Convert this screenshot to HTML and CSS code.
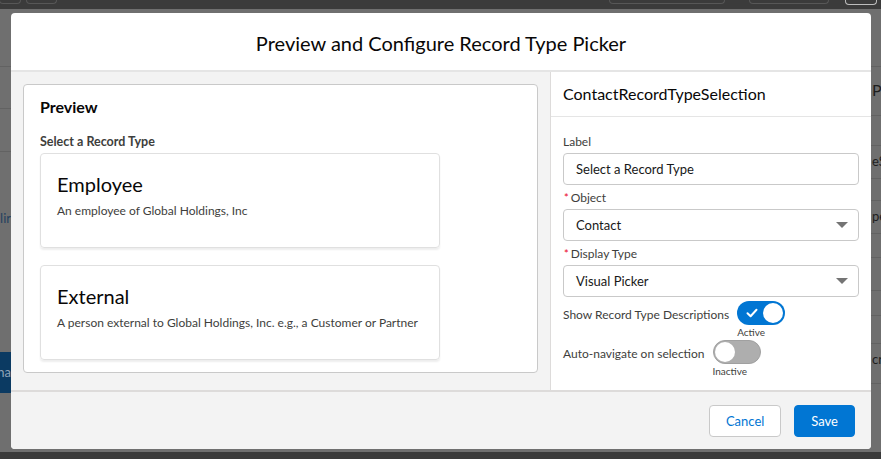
FILE: index.html
```html
<!DOCTYPE html>
<html lang="en">
<head>
<meta charset="utf-8">
<title>Preview and Configure Record Type Picker</title>
<link rel="stylesheet" href="styles.css">
</head>
<body>
<div class="topbar">
  <span class="tb-btn tb-a"></span>
  <span class="tb-btn tb-b"></span>
  <span class="tb-btn tb-c"></span>
  <span class="tb-btn tb-d"></span>
  <span class="tb-btn tb-e"></span>
</div>
<div class="stage">
  <div class="bd-left">
    <div class="bd-row h57"></div>
    <div class="bd-row h41"></div>
    <div class="bd-row h42"></div>
    <div class="bd-gap g56"></div>
    <div class="bd-text bd-link">lir</div>
    <div class="bd-gap g119"></div>
    <div class="bd-block">ha</div>
  </div>

  <div class="modal">
    <header class="modal-header">
      <h2>Preview and Configure Record Type Picker</h2>
    </header>
    <div class="modal-body">
      <section class="preview-col">
        <div class="preview-panel">
          <h3>Preview</h3>
          <div class="picker-label">Select a Record Type</div>
          <div class="rt-card">
            <div class="rt-title">Employee</div>
            <div class="rt-desc">An employee of Global Holdings, Inc</div>
          </div>
          <div class="rt-card rt-gap">
            <div class="rt-title">External</div>
            <div class="rt-desc">A person external to Global Holdings, Inc. e.g., a Customer or Partner</div>
          </div>
        </div>
      </section>
      <aside class="config-col">
        <div class="config-header">ContactRecordTypeSelection</div>
        <div class="config-form">
          <div class="field">
            <div class="field-label">Label</div>
            <div class="input">Select a Record Type</div>
          </div>
          <div class="field">
            <div class="field-label"><abbr class="req">*</abbr>Object</div>
            <div class="input select"><span>Contact</span><span class="caret"></span></div>
          </div>
          <div class="field">
            <div class="field-label"><abbr class="req">*</abbr>Display Type</div>
            <div class="input select"><span>Visual Picker</span><span class="caret"></span></div>
          </div>
          <div class="toggle-row">
            <div class="toggle-text">Show Record Type Descriptions</div>
            <div class="toggle-col">
              <div class="toggle on">
                <svg class="check" width="12" height="10" viewBox="0 0 12 10"><path d="M1.5 5.2 4.6 8.2 10.5 1.8" fill="none" stroke="#fff" stroke-width="2" stroke-linecap="round" stroke-linejoin="round"/></svg>
                <span class="knob"></span>
              </div>
              <div class="toggle-status">Active</div>
            </div>
          </div>
          <div class="toggle-row">
            <div class="toggle-text">Auto-navigate on selection</div>
            <div class="toggle-col">
              <div class="toggle off">
                <span class="knob"></span>
              </div>
              <div class="toggle-status">Inactive</div>
            </div>
          </div>
        </div>
      </aside>
    </div>
    <footer class="modal-footer">
      <button class="btn btn-neutral">Cancel</button>
      <button class="btn btn-brand">Save</button>
    </footer>
  </div>

  <div class="bd-right">
    <div class="bd-row h57"></div>
    <div class="bd-row r48 bd-frag big">P</div>
    <div class="bd-row r30"></div>
    <div class="bd-row r33 bd-frag">eS</div>
    <div class="bd-row r22"></div>
    <div class="bd-row r33 bd-frag">pe</div>
    <div class="bd-row r24"></div>
    <div class="bd-row r33"></div>
    <div class="bd-row r25"></div>
    <div class="bd-row r28"></div>
    <div class="bd-row r40 bd-frag">cri</div>
  </div>
</div>
<div class="bottombar"></div>
</body>
</html>
```
FILE: styles.css
```css
* { box-sizing: border-box; }

html, body {
  margin: 0;
  padding: 0;
}

body {
  width: 881px;
  height: 459px;
  overflow: hidden;
  background: #6f6f6f;
  font-family: "Lato", "Open Sans", sans-serif;
  color: #181818;
}

/* ---------- backdrop ---------- */
.topbar {
  height: 9px;
  background: #3b3b3b;
  display: flex;
  align-items: flex-start;
}
.tb-btn {
  display: block;
  height: 4px;
  border: 1px solid #575757;
  border-top: none;
  border-radius: 0 0 4px 4px;
}
.tb-a { width: 22px; margin-left: -1px; }
.tb-b { width: 31px; margin-left: 5px; }
.tb-c { width: 116px; margin-left: 552px; }
.tb-d { width: 80px; margin-left: 24px; }
.tb-e { width: 32px; margin-left: 16px; border-color: #bdbdbd; height: 5px; }

.stage {
  height: 443px;
  display: grid;
  grid-template-columns: 11px 860px 10px;
}

.bd-left, .bd-right {
  overflow: hidden;
  white-space: nowrap;
  font-size: 13px;
}
.bd-row { border-bottom: 1px solid #626262; }
.h57 { height: 58px; }
.h41 { height: 42px; }
.h42 { height: 43px; }
.g56 { height: 56px; }
.g119 { height: 124px; }
.bd-text { height: 20px; line-height: 20px; }
.bd-link { color: #24415f; direction: rtl; }
.bd-block {
  height: 41px;
  line-height: 41px;
  background: #0b3a62;
  color: #8ea3b8;
  direction: rtl;
}

.bd-right { color: #1e1e1e; }
.r48 { height: 49px; }
.r30 { height: 30px; }
.r33 { height: 33px; }
.r22 { height: 22px; }
.r24 { height: 24px; }
.r25 { height: 25px; }
.r28 { height: 28px; }
.r40 { height: 40px; }
.bd-frag { line-height: 30px; padding-left: 1px; }
.bd-frag.big { font-size: 16px; line-height: 46px; }

.bottombar {
  height: 7px;
  background: #3a3a3a;
}

/* ---------- modal ---------- */
.modal {
  margin-top: 4px;
  height: 436px;
  background: #fff;
  border-radius: 4px;
  display: flex;
  flex-direction: column;
  overflow: hidden;
}

.modal-header {
  height: 59px;
  flex: none;
  border-bottom: 2px solid #e5e5e5;
  display: flex;
  align-items: center;
  justify-content: center;
}
.modal-header h2 {
  margin: 0;
  padding-top: 3px;
  font-size: 20px;
  font-weight: 400;
  line-height: 24px;
  color: #080707;
}

.modal-body {
  height: 318px;
  flex: none;
  display: flex;
  background: #f3f3f3;
}

/* preview column */
.preview-col {
  width: 539px;
  flex: none;
  padding: 12px 12px 0 12px;
}
.preview-panel {
  background: #fff;
  border: 1px solid #c9c9c9;
  border-radius: 4px;
  padding: 10px 16px 12px 16px;
}
.preview-panel h3 {
  margin: 0;
  font-size: 16px;
  line-height: 24px;
  font-weight: 700;
  color: #080707;
}
.picker-label {
  margin-top: 14px;
  margin-bottom: 2px;
  font-size: 12.5px;
  line-height: 18px;
  font-weight: 700;
  color: #3e3e3c;
}
.rt-card {
  width: 400px;
  height: 95px;
  border: 1px solid #e0e0e0;
  border-radius: 4px;
  box-shadow: 0 2px 2px rgba(0, 0, 0, 0.07);
  padding: 17px 16px 0 16px;
}
.rt-gap { margin-top: 17px; }
.rt-title {
  font-size: 20px;
  line-height: 26px;
  color: #080707;
}
.rt-desc {
  margin-top: 5px;
  font-size: 12px;
  line-height: 18px;
  white-space: nowrap;
  color: #3e3e3c;
}

/* config column */
.config-col {
  flex: 1;
  background: #fff;
  border-left: 1px solid #dddbda;
}
.config-header {
  height: 45px;
  border-bottom: 1px solid #e5e5e5;
  padding: 0 12px;
  font-size: 16px;
  line-height: 44px;
  color: #080707;
}
.config-form {
  padding: 16px 12px 0 12px;
}
.field { margin-bottom: 4px; }
.field-label {
  font-size: 12px;
  line-height: 18px;
  margin-bottom: 2px;
  color: #3e3e3c;
}
.req {
  color: #ea001e;
  text-decoration: none;
  border: none;
  margin: 0 2px 0 1px;
  font-size: 11px;
}
.input {
  height: 32px;
  border: 1px solid #c9c9c9;
  border-radius: 4px;
  padding: 0 10px 0 12px;
  font-size: 13px;
  line-height: 30px;
  color: #181818;
}
.select {
  display: flex;
  align-items: center;
  justify-content: space-between;
}
.caret {
  width: 0;
  height: 0;
  border-left: 6px solid transparent;
  border-right: 6px solid transparent;
  border-top: 6px solid #747474;
}

.toggle-row {
  display: flex;
  align-items: flex-start;
  gap: 8px;
  margin-bottom: 1px;
}
.toggle-text {
  padding-top: 5px;
  font-size: 12px;
  line-height: 18px;
  color: #3e3e3c;
}
.toggle-col {
  display: flex;
  flex-direction: column;
  align-items: flex-start;
}
.toggle {
  width: 48px;
  height: 24px;
  border-radius: 12px;
  display: flex;
  align-items: center;
  padding: 0 2px;
}
.toggle.on {
  background: #0176d3;
  justify-content: space-between;
  padding-left: 9px;
}
.toggle.off {
  background: #aeaeae;
  border: 1px solid #a0a0a0;
  padding: 0 1px;
}
.check { display: block; }
.knob {
  width: 20px;
  height: 20px;
  border-radius: 50%;
  background: #fff;
}
.toggle-status {
  font-size: 10px;
  line-height: 14px;
  color: #3e3e3c;
}

/* footer */
.modal-footer {
  flex: 1;
  border-top: 2px solid #dddbda;
  background: #f3f3f3;
  display: flex;
  justify-content: flex-end;
  align-items: flex-start;
  gap: 13px;
  padding: 13px 16px 0 16px;
}
.btn {
  height: 32px;
  border-radius: 4px;
  font-family: inherit;
  font-size: 13px;
  line-height: 30px;
  padding: 0 16px;
  cursor: pointer;
}
.btn-neutral {
  background: #fff;
  border: 1px solid #c9c9c9;
  color: #0176d3;
  min-width: 71px;
}
.btn-brand {
  background: #0176d3;
  border: 1px solid #0176d3;
  color: #fff;
  min-width: 60px;
}
```
